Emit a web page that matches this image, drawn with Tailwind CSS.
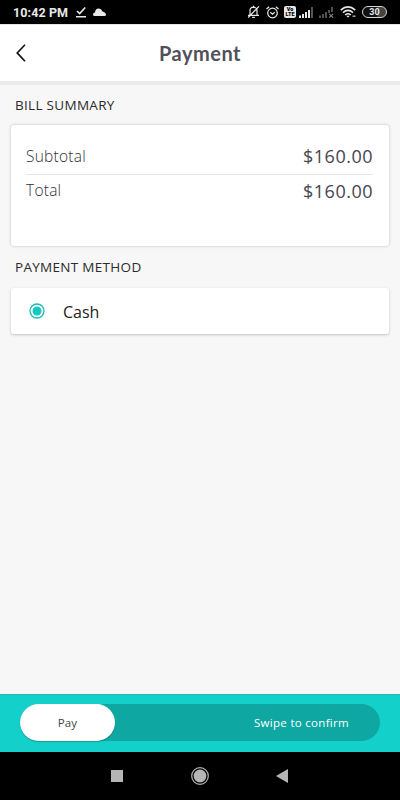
<!DOCTYPE html>
<html lang="en" class="h-full">
<head>
    <meta charset="UTF-8">
    <meta name="viewport" content="width=device-width, initial-scale=1.0">
    <title>Payment</title>
    <script src="https://cdn.jsdelivr.net/npm/@tailwindcss/browser@4"></script>
</head>
<body class="h-screen w-[400px] overflow-hidden flex flex-col bg-[#f7f7f7] font-['Open_Sans',sans-serif]">

    <!-- Status bar -->
    <div class="h-6 shrink-0 bg-black flex items-center pl-[13px] text-[#e8e8e8]">
        <span class="w-[63px] pt-px font-['Roboto',sans-serif] text-[12.5px] font-bold leading-6 tracking-[0.1px] whitespace-nowrap">10:42 PM</span>
        <svg class="w-[10px] h-3" viewBox="0 0 10 12" fill="none" stroke="currentColor" stroke-width="1.6"><path d="M1 5l2.7 2.6L9.2 1.5M0 10.8h10"/></svg>
        <svg class="ml-[7px] w-[13px] h-2" viewBox="0 0 13 8" fill="currentColor"><path d="M1.5 8Q0 8 0 6.4Q0 4.8 2 4.5Q2.3 .4 5.5 .4Q8.3 .4 9.2 3.2Q13 4.4 13 6.7Q13 8 11.5 8z"/></svg>

        <svg class="ml-auto w-[13px] h-[14px]" viewBox="0 0 13 14" fill="none" stroke="currentColor" stroke-width="1.2"><path d="M3 9.7V5.5Q3 2.5 6.5 2.2Q10 2.5 10 5.5V9.7M1 10.3h11M5.2 12.3h2.6M6.5 2.2V.8M12 1.4L1.2 12.5"/></svg>
        <svg class="ml-[6px] w-[13px] h-[13px]" viewBox="0 0 13 13" fill="none" stroke="currentColor" stroke-width="1.2"><circle cx="6.5" cy="7" r="4.8"/><path d="M.5 3L3.2.8M12.5 3L9.8.8M4.3 6.2l2.2 1.9 2.2-1.9"/></svg>
        <div class="ml-[5px] w-[12px] h-[12px] rounded-[2px] bg-[#e8e8e8] text-black font-['Roboto',sans-serif] font-black text-[5.5px] leading-[5.5px] text-center flex flex-col justify-center"><span>Vo</span><span>LTE</span></div>
        <svg class="ml-[3px] w-[14px] h-[11px]" viewBox="0 0 14 11" fill="currentColor"><path d="M0 8.5h2V11H0zM3 7h2v4H3zM6 5h2v6H6zM9 3h2v8H9z"/><path d="M12 0h2v11h-2z" fill="#555"/></svg>
        <svg class="ml-[6px] w-[15px] h-[11px]" viewBox="0 0 15 11" fill="#505050"><path d="M0 8.5h2V11H0zM3 7h2v4H3zM6 5h2v6H6zM9 3h2v3H9zM12 0h2v5h-2z"/><path d="M10.3 6.8l3.8 3.8M14.1 6.8l-3.8 3.8" stroke="#858585" stroke-width="1.1"/></svg>
        <svg class="ml-[6px] w-4 h-3" viewBox="0 0 16 12" fill="none" stroke="currentColor" stroke-width="1.6"><path d="M.7 4.1Q8-2.4 15.3 4.1M3 6.6Q8 2.2 13 6.6M5.2 9Q8 6.5 10.8 9"/><path d="M6.3 9.8h3.4L8 11.8z" fill="currentColor" stroke="none"/><path d="M12.5 10.2h3" stroke="#999"/></svg>
        <div class="ml-[6px] mr-[13px] w-[25px] h-3 rounded-full border border-[#d5d5d5] bg-[linear-gradient(90deg,#111_60%,#444_60%)] font-['Roboto',sans-serif] text-[9px] font-bold leading-[10px] text-center">30</div>
    </div>

    <!-- Header -->
    <header class="relative h-[61px] shrink-0 bg-white flex items-center justify-center border-t border-t-[#e5e5e5] border-b-4 border-b-[#ebebeb]">
        <svg class="absolute left-4 top-[19px] w-[10px] h-[18px]" viewBox="0 0 10 18" fill="none" stroke="#111" stroke-width="1.6"><path d="M9 .8L1.2 8.9L9 17.2"/></svg>
        <h1 class="font-['Lato',sans-serif] text-[20px] font-bold tracking-[0.5px] text-[#50505c]">Payment</h1>
    </header>

    <main class="flex-1 px-[11px]">
        <h2 class="mt-[10px] h-5 pl-1 text-[13.5px] leading-5 tracking-[0.3px] text-[#2b2b2b]">BILL SUMMARY</h2>
        <div class="mt-[10px] h-[121px] rounded-[3px] bg-white pl-[15px] pr-4 pt-[14px] shadow-[0_0_3px_rgba(0,0,0,0.24)] text-[#30303a]">
            <div class="flex h-9 items-center justify-between border-b border-[#e6e6e6]">
                <span class="text-[15.5px] font-light tracking-[0.25px]">Subtotal</span>
                <span class="text-[18px] tracking-[0.5px] text-[#454552]">$160.00</span>
            </div>
            <div class="flex h-8 items-center justify-between">
                <span class="text-[15.5px] font-light tracking-[0.25px]">Total</span>
                <span class="text-[18px] tracking-[0.5px] text-[#454552]">$160.00</span>
            </div>
        </div>

        <h2 class="mt-[11px] h-5 pl-1 text-[13.5px] leading-5 tracking-[0.3px] text-[#2b2b2b]">PAYMENT METHOD</h2>
        <label class="mt-[11px] h-[46px] rounded-[3px] bg-white pl-[18px] flex items-center shadow-[0_1px_3px_rgba(0,0,0,0.22)]">
            <svg class="w-4 h-4" viewBox="0 0 16 16"><circle cx="8" cy="8" r="7" fill="#fff" stroke="#20b9b4" stroke-width="1.3"/><circle cx="8" cy="8" r="4.5" fill="#14c9c3"/></svg>
            <span class="ml-[18px] pt-px text-[16px] text-[#222]">Cash</span>
        </label>
    </main>

    <!-- Swipe to pay -->
    <div class="h-[58px] shrink-0 bg-[#13d0ca] border-t border-[#2bb5b0] px-5 pt-[9px]">
        <div class="h-[37px] rounded-full bg-[#0fa7a2] flex items-center justify-between pr-[31px]">
            <div class="w-[95px] h-[37px] rounded-full bg-white shadow-[0_1px_1px_rgba(0,0,0,0.25)] flex items-center justify-center text-[11.5px] tracking-[0.2px] text-[#444]">Pay</div>
            <span class="text-[11.5px] tracking-[0.3px] text-white">Swipe to confirm</span>
        </div>
    </div>

    <!-- Navigation bar -->
    <nav class="h-12 shrink-0 bg-black flex items-center pl-[111px]">
        <div class="w-3 h-3 bg-[#b5b5b5]"></div>
        <svg class="ml-[68px] w-[18px] h-[18px]" viewBox="0 0 18 18"><circle cx="9" cy="9" r="8.3" fill="none" stroke="#b5b5b5" stroke-width="1.2"/><circle cx="9" cy="9" r="6.4" fill="#b5b5b5"/></svg>
        <svg class="ml-[67px] w-3 h-[14px]" viewBox="0 0 12 14" fill="#b5b5b5"><path d="M12 0v14L0 7z"/></svg>
    </nav>

</body>
</html>
